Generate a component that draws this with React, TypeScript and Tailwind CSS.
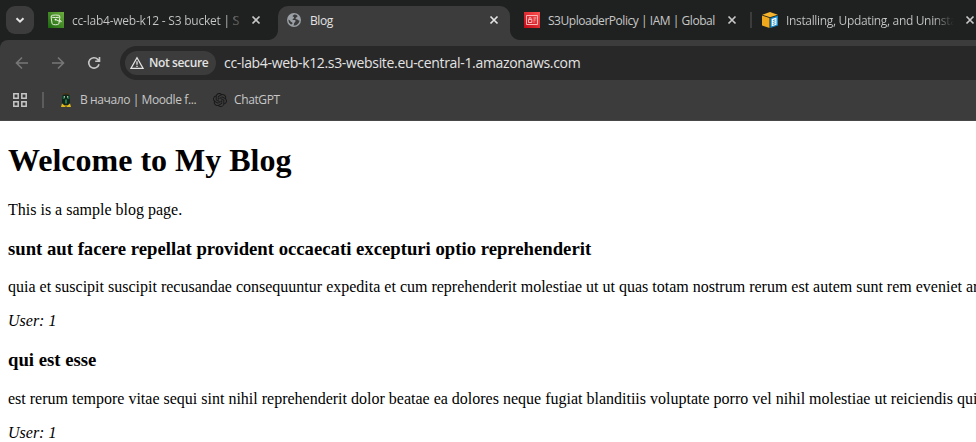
import React from "react";
import { SiOpenai } from "react-icons/si";

const ui = "font-['Open_Sans','Noto_Sans',sans-serif]";

function Close({ className = "" }: { className?: string }) {
  return (
    <svg className={`size-4 shrink-0 ${className}`} viewBox="0 0 16 16" fill="none" stroke="currentColor" strokeWidth="1.7">
      <path d="M4.5 4.5l7 7M11.5 4.5l-7 7" />
    </svg>
  );
}

function BucketIcon() {
  return (
    <svg className="size-4 shrink-0" viewBox="0 0 16 16" fill="none">
      <defs>
        <linearGradient id="bucket" x1="0" y1="1" x2="1" y2="0">
          <stop stopColor="#1b660f" />
          <stop offset="1" stopColor="#6cae3e" />
        </linearGradient>
      </defs>
      <path fill="url(#bucket)" d="M0 0h16v16H0z" />
      <g stroke="#e4efd9" strokeWidth="1">
        <ellipse cx="7.5" cy="4.3" rx="4.5" ry="1.3" />
        <path d="M3 4.5l1.1 7.3c.5 1.3 6.3 1.3 6.8 0L12 4.5M7.5 7.5l5 2.2c1.2.5 1.4-.6-.6-1.5" />
      </g>
      <circle cx="7.5" cy="7.6" r=".9" fill="#fff" />
    </svg>
  );
}

function GlobeIcon() {
  return (
    <svg className="size-4 shrink-0" viewBox="0 0 16 16">
      <circle cx="8" cy="8" r="7" fill="#9aa0a6" />
      <path fill="#3c3c3c" d="M8.4 2.5c-1 .4-2.2 1.4-1.6 2.1.7.6 1.5.4 1.2 1.4-.3.8-1.5.6-1.5 1.4 0 .7 1.3.5 2.2.6 1 .2 1.2 1.2.4 1.9-.8.6-1.2 1-1.2 2.2 0 .8-.2 1.2-.6 1.4 3.4.3 6-2.1 6.2-5.1-.6.4-1.2.1-1.7-.6-.5-.8-1.5-.4-2-.9-.6-.6.1-1.3.9-1.6.8-.4 1-1.1.5-1.8-.8-.7-1.8-1.1-2.8-1zM2.5 7.5c-.2 2.1.8 4 2.5 5 .9-.1 1.6-.5 1.5-1.4-.1-.8-1.2-.7-1.6-1.3-.5-.8-1.2-1.9-2.4-2.3z" />
    </svg>
  );
}

function IamIcon() {
  return (
    <svg className="size-4 shrink-0" viewBox="0 0 16 16" fill="none">
      <defs>
        <linearGradient id="iam" x1="0" y1="1" x2="1" y2="0">
          <stop stopColor="#bd0816" />
          <stop offset="1" stopColor="#ff5252" />
        </linearGradient>
      </defs>
      <path fill="url(#iam)" d="M0 0h16v16H0z" />
      <g stroke="#ffc4c4" strokeWidth=".9">
        <path d="M2.5 3.5h11v9h-11zM4.5 7.5h3.3v3H4.5zM5.2 7.5V6c0-1 1.8-1 1.8 0v1.5M9.5 6h2.8M9.5 8h2M9.5 10h1" />
      </g>
    </svg>
  );
}

function CubeIcon() {
  return (
    <svg className="size-4 shrink-0" viewBox="0 0 16 16">
      <path fill="#f5b52e" d="M8 0l7.8 2.7L8 5.2.3 2.7z" />
      <path fill="#f0a81d" d="M0 3.5l7.5 2.4V16L0 13.4z" />
      <path fill="#1688c8" d="M8.3 5.9L16 3.5v9.9L8.3 16z" />
      <path fill="#fff" d="M9.7 6.9l4.8-1.4v7.3l-4.8 1.5z" />
      <path stroke="#1688c8" strokeWidth=".9" d="M10.8 8.6l2.6-.8M10.8 10.5l2.6-.8M10.8 12.4l2.6-.8" />
    </svg>
  );
}

function OwlIcon() {
  return (
    <svg className="h-4 w-3 shrink-0" viewBox="0 0 12 16">
      <path fill="#49351d" d="M2.5 1h7v2.5h-7z" />
      <rect x="2" y="2.5" width="8" height="10.5" rx="3" fill="#10251c" />
      <path fill="#216b43" d="M2.7 4h2v3h-2zM7.3 4h2v3h-2z" />
      <path fill="#d8dfca" d="M4 4.3h1v1.2H4zM7 4.3h1v1.2H7z" />
      <path fill="#287746" d="M5 7.5h2v4H5z" />
      <path fill="#e2bd18" d="M2 11.5l2.5 2h3l2.5-2 1 3.5H7l-1-1-1 1H1z" />
    </svg>
  );
}

export default function App() {
  return (
    <div className="flex h-[442px] w-[976px] flex-col overflow-hidden bg-white">
      <header className={`${ui} h-[121px] shrink-0 overflow-hidden bg-[#1f2120] text-xs text-[#c7c7c7]`}>
        <div className="flex h-10 w-[1000px] items-center">
          <button className="ml-1.5 flex size-7 shrink-0 items-center justify-center rounded-[9px] bg-[#3c3c3c] text-[#e3e3e3]">
            <svg className="size-4" viewBox="0 0 16 16" fill="none" stroke="currentColor" strokeWidth="2"><path d="M4.5 6.2L8 9.7l3.5-3.5" /></svg>
          </button>
          <div className="ml-3.5 flex w-[220px] shrink-0 items-center">
            <BucketIcon />
            <span className="ml-2 mt-px w-[168px] overflow-hidden whitespace-nowrap bg-linear-to-r from-[#c7c7c7] from-[95%] to-[#1f2120] bg-clip-text tracking-[-0.23px] text-transparent">cc-lab4-web-k12 - S3 bucket | <span className="text-[#555756]">S</span></span>
            <Close className="ml-2" />
          </div>
          <div className="flex h-full w-[252px] shrink-0 items-end">
            <div className="size-2.5 shrink-0 bg-[radial-gradient(circle_at_0_0,#1f2120_9.5px,#3c3c3c_10.5px)]" />
            <div className="flex h-[34px] w-[232px] items-center rounded-t-[10px] bg-[#3c3c3c] pb-1.5 pl-2 text-[#e3e3e3]">
              <GlobeIcon />
              <span className="ml-2 mt-px w-[168px] tracking-[-0.45px]">Blog</span>
              <Close className="ml-2" />
            </div>
            <div className="size-2.5 shrink-0 bg-[radial-gradient(circle_at_100%_0,#1f2120_9.5px,#3c3c3c_10.5px)]" />
          </div>
          <div className="ml-1 flex w-[227px] shrink-0 items-center">
            <IamIcon />
            <span className="ml-2 mt-px w-[168px] whitespace-nowrap tracking-[-0.46px]">S3UploaderPolicy | IAM | Global</span>
            <Close className="ml-2" />
          </div>
          <div className="-ml-px h-4 w-0.5 shrink-0 bg-[#3c3c3c]" />
          <div className="ml-2.5 flex shrink-0 items-center">
            <CubeIcon />
            <span className="ml-2 mt-px w-[168px] overflow-hidden whitespace-nowrap bg-linear-to-r from-[#c7c7c7] from-88% to-[#1f2120] bg-clip-text tracking-[-0.34px] text-transparent">Installing, Updating, and Uninsta</span>
            <Close className="ml-2" />
          </div>
        </div>
        <div className="h-[81px] rounded-tl-lg border-b border-[#474747] bg-[#3c3c3c] pt-1.5">
          <div className="flex h-[34px] items-center">
            <svg className="ml-3.5 size-4 shrink-0" viewBox="0 0 16 16" fill="none" stroke="#777" strokeWidth="1.6"><path d="M14 8H3M8 2.5L2.5 8 8 13.5" /></svg>
            <svg className="ml-5 size-4 shrink-0" viewBox="0 0 16 16" fill="none" stroke="#777" strokeWidth="1.6"><path d="M2 8h11M8 2.5L13.5 8 8 13.5" /></svg>
            <svg className="ml-5 size-4 shrink-0" viewBox="0 0 16 16" fill="none" stroke="#c7c7c7" strokeWidth="1.6"><path d="M13 9.2A5.2 5.2 0 1 1 11.8 4.4L13.3 6M13.5 2v4.3H9.2" /></svg>
            <div className="ml-[18px] flex h-[34px] flex-1 items-center rounded-l-full bg-[#282828] pl-[5px]">
              <div className="flex h-6 w-[91px] shrink-0 items-center rounded-full bg-[#3c3c3c] pl-[5px] text-[#e3e3e3]">
                <svg className="size-3.5 shrink-0" viewBox="0 0 14 14" fill="none" stroke="currentColor" strokeWidth="1.3"><path d="M7 1.8L13 12.3H1zM7 5.3v3.4M7 9.7V11" /></svg>
                <span className="ml-[5px] whitespace-nowrap font-semibold tracking-[-0.38px]">Not secure</span>
              </div>
              <span className="ml-2 whitespace-nowrap text-sm tracking-[-0.33px] text-[#e3e3e3]">cc-lab4-web-k12.s3-website.eu-central-1.amazonaws.com</span>
            </div>
          </div>
          <div className="flex h-10 items-center">
            <svg className="ml-[13px] size-3.5 shrink-0" viewBox="0 0 14 14" fill="none" stroke="#c7c7c7" strokeWidth="1.5"><path d="M.8.8h4.4v4.4H.8zM8.8.8h4.4v4.4H8.8zM.8 8.8h4.4v4.4H.8zM8.8 8.8h4.4v4.4H8.8z" /></svg>
            <div className="ml-[15px] h-4 w-0.5 bg-[#5c5c5c]" />
            <div className="ml-4 flex w-[153px] items-center"><OwlIcon /><span className="ml-2 whitespace-nowrap tracking-[-0.4px]">В начало | Moodle f...</span></div>
            <SiOpenai className="size-3.5 shrink-0 text-[#171717]" />
            <span className="ml-[7px] tracking-[-0.38px]">ChatGPT</span>
          </div>
        </div>
      </header>
      <main className="w-[976px] overflow-hidden whitespace-nowrap pl-2 pt-[21px] font-['Liberation_Serif','Times_New_Roman',serif] text-base/[18px] text-black">
        <h1 className="text-[32px]/[37px] font-bold">Welcome to My Blog</h1>
        <p className="mt-[22px]">This is a sample blog page.</p>
        <h3 className="mt-[19px] text-[18.72px]/[21px] font-bold">sunt aut facere repellat provident occaecati excepturi optio reprehenderit</h3>
        <p className="mt-[19px]">quia et suscipit suscipit recusandae consequuntur expedita et cum reprehenderit molestiae ut ut quas totam nostrum rerum est autem sunt rem eveniet architecto</p>
        <p className="mt-4 italic">User: 1</p>
        <h3 className="mt-[19px] text-[18.72px]/[21px] font-bold">qui est esse</h3>
        <p className="mt-5">est rerum tempore vitae sequi sint nihil reprehenderit dolor beatae ea dolores neque fugiat blanditiis voluptate porro vel nihil molestiae ut reiciendis qui aperiam non debitis</p>
        <p className="mt-4 italic">User: 1</p>
      </main>
    </div>
  );
}
